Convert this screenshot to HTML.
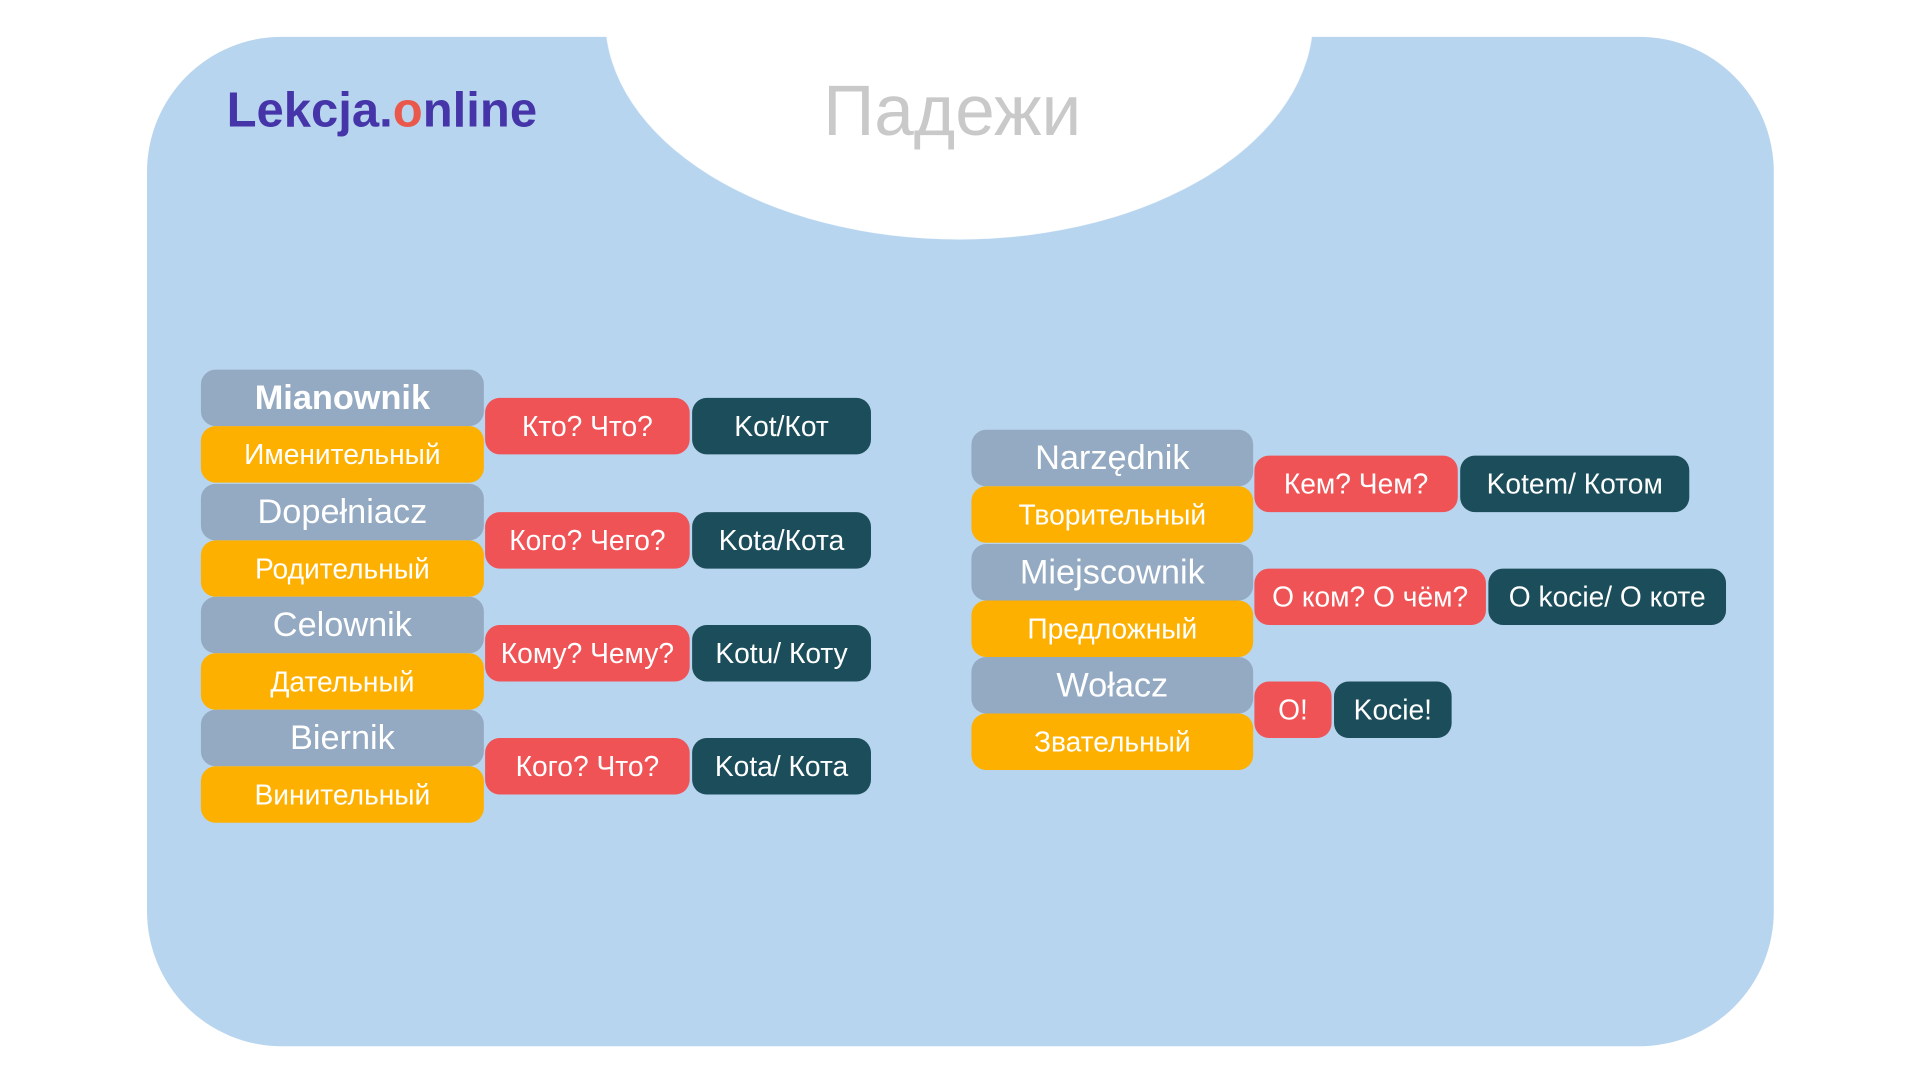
<!DOCTYPE html>
<html><head><meta charset="utf-8"><style>
html,body{margin:0;padding:0;background:#fff;width:1920px;height:1080px;overflow:hidden}
#w{position:absolute;left:0;top:0;width:1560px;height:878px;transform:scale(1.2250,1.2280);transform-origin:0 0;font-family:"Liberation Sans",sans-serif}
.panel{position:absolute;left:120px;top:30px;width:1328px;height:822px;background:#b8d5ef;border-radius:110px}
.cut{position:absolute;left:494px;top:-165px;width:578px;height:360px;border-radius:50%;background:#fff}
.title{position:absolute;left:672px;top:57px;font-size:58px;color:#c9c9c9}
.logo{position:absolute;left:185px;top:68px;font-size:40px;font-weight:bold;color:#4535a8}
.b{position:absolute;height:46px;border-radius:12px;color:#fff;font-size:23px;display:flex;align-items:center;justify-content:center;white-space:nowrap}
.g{background:#94aac2;font-size:28px}.o{background:#fdb000}.r{background:#f05356}.d{background:#1c4d5a}
</style></head><body><div id="w">
<div class="panel"></div><div class="cut"></div>
<div class="title">Падежи</div>
<div class="logo">Lekcja.<span style="color:#e9584a">o</span>nline</div>

<div class="b g" style="left:164px;top:301px;width:231px;font-weight:bold">Mianownik</div>
<div class="b o" style="left:164px;top:347px;width:231px">Именительный</div>
<div class="b g" style="left:164px;top:394px;width:231px">Dopełniacz</div>
<div class="b o" style="left:164px;top:440px;width:231px">Родительный</div>
<div class="b g" style="left:164px;top:486px;width:231px">Celownik</div>
<div class="b o" style="left:164px;top:532px;width:231px">Дательный</div>
<div class="b g" style="left:164px;top:578px;width:231px">Biernik</div>
<div class="b o" style="left:164px;top:624px;width:231px">Винительный</div>

<div class="b r" style="left:396px;top:324px;width:167px">Кто? Что?</div>
<div class="b d" style="left:565px;top:324px;width:146px">Kot/Кот</div>
<div class="b r" style="left:396px;top:417px;width:167px">Кого? Чего?</div>
<div class="b d" style="left:565px;top:417px;width:146px">Kota/Кота</div>
<div class="b r" style="left:396px;top:509px;width:167px">Кому? Чему?</div>
<div class="b d" style="left:565px;top:509px;width:146px">Kotu/ Коту</div>
<div class="b r" style="left:396px;top:601px;width:167px">Кого? Что?</div>
<div class="b d" style="left:565px;top:601px;width:146px">Kota/ Кота</div>

<div class="b g" style="left:793px;top:350px;width:230px">Narzędnik</div>
<div class="b o" style="left:793px;top:396px;width:230px">Творительный</div>
<div class="b g" style="left:793px;top:443px;width:230px">Miejscownik</div>
<div class="b o" style="left:793px;top:489px;width:230px">Предложный</div>
<div class="b g" style="left:793px;top:535px;width:230px">Wołacz</div>
<div class="b o" style="left:793px;top:581px;width:230px">Звательный</div>

<div class="b r" style="left:1024px;top:371px;width:166px">Кем? Чем?</div>
<div class="b d" style="left:1192px;top:371px;width:187px">Kotem/ Котом</div>
<div class="b r" style="left:1024px;top:463px;width:189px">О ком? О чём?</div>
<div class="b d" style="left:1215px;top:463px;width:194px">O kocie/ О коте</div>
<div class="b r" style="left:1024px;top:555px;width:63px">O!</div>
<div class="b d" style="left:1089px;top:555px;width:96px">Kocie!</div>
</div></body></html>
